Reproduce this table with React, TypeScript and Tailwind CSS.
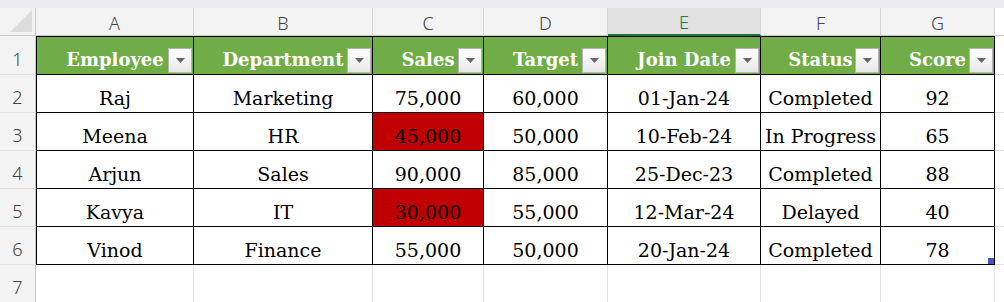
import React from "react";

const colLetters = ["A", "B", "C", "D", "E", "F", "G"];
const colWidth = ["w-[158px]", "w-[179px]", "w-[111px]", "w-[124px]", "w-[153px]", "w-[120px]", "w-[114px]"];

const headers = ["Employee", "Department", "Sales", "Target", "Join Date", "Status", "Score"];

const rows = [
  ["Raj", "Marketing", "75,000", "60,000", "01-Jan-24", "Completed", "92"],
  ["Meena", "HR", "45,000", "50,000", "10-Feb-24", "In Progress", "65"],
  ["Arjun", "Sales", "90,000", "85,000", "25-Dec-23", "Completed", "88"],
  ["Kavya", "IT", "30,000", "55,000", "12-Mar-24", "Delayed", "40"],
  ["Vinod", "Finance", "55,000", "50,000", "20-Jan-24", "Completed", "78"],
];

// sales under target get the red fill
const isLow = (r: string[]) => parseInt(r[2].replace(",", "")) < parseInt(r[3].replace(",", ""));

const serif = "font-['DejaVu_Serif',serif]";
const ui = "font-['Noto_Sans',sans-serif] font-light text-[18px] text-[#444]";

function FilterButton() {
  return (
    <span className="absolute bottom-px right-px flex h-[25px] w-[24px] items-center justify-center border border-[#b4b4b4] bg-gradient-to-b from-white to-[#e8e8e8]">
      <svg width="9" height="5" viewBox="0 0 9 5">
        <path d="M0 0 H9 L4.5 5 Z" fill="#666" />
      </svg>
    </span>
  );
}

function RowHead({ n, h }: { n: number; h: string }) {
  return (
    <div className={`${h} w-[36px] shrink-0 flex items-end justify-center pb-[6px] border-r border-b border-r-[#c8c8c8] border-b-[#e2e2e2] bg-[#f3f3f3] ${ui} leading-none`}>
      {n}
    </div>
  );
}

export default function App() {
  return (
    <div className="w-[1004px] h-[302px] overflow-hidden bg-white">
      <div className="h-[8px] bg-[#e9ebee]" />

      {/* column letters */}
      <div className="flex h-[28px]">
        <div className="relative w-[36px] shrink-0 border-b border-r border-[#c8c8c8] bg-[#f3f3f3]">
          <svg className="absolute bottom-[3px] right-[3px]" width="22" height="22" viewBox="0 0 22 22">
            <path d="M22 0 V22 H0 Z" fill="#dcdcdc" />
          </svg>
        </div>
        {colLetters.map((c, i) => {
          const sel = c === "E";
          return (
            <div
              key={c}
              className={`${colWidth[i]} shrink-0 flex items-end justify-center pb-[3px] leading-none border-r border-r-[#d4d4d4] ${ui} ${
                sel ? "bg-[#e1e1e1] !text-[#1e7145] border-b-2 border-b-[#1e7145]" : "bg-[#f3f3f3] border-b border-b-[#c8c8c8]"
              }`}
            >
              {c}
            </div>
          );
        })}
        <div className="flex-1 border-b border-[#c8c8c8] bg-white" />
      </div>

      {/* row 1: table headers */}
      <div className="flex h-[39px]">
        <RowHead n={1} h="h-[39px]" />
        {headers.map((t, i) => (
          <div
            key={t}
            className={`${colWidth[i]} relative shrink-0 flex items-end justify-center pb-[5px] border-y border-r border-black ${i === 0 ? "border-l" : ""} bg-[#70ad47] ${serif} text-[18px] font-bold text-white leading-none`}
          >
            {t}
            <FilterButton />
          </div>
        ))}
        <div className="flex-1 border-b border-[#e1e1e1]" />
      </div>

      {/* data rows */}
      {rows.map((r, ri) => (
        <div key={ri} className="flex h-[38px]">
          <RowHead n={ri + 2} h="h-[38px]" />
          {r.map((v, ci) => (
            <div
              key={ci}
              className={`${colWidth[ci]} relative shrink-0 flex items-end justify-center pb-[4px] border-b border-r border-black ${ci === 0 ? "border-l" : ""} ${
                ci === 2 && isLow(r) ? "bg-[#c00000]" : "bg-white"
              } ${serif} text-[19px] text-black leading-none`}
            >
              {v}
              {ri === rows.length - 1 && ci === 6 && <span className="absolute bottom-0 right-0 h-[6px] w-[6px] bg-[#4754c0]" />}
            </div>
          ))}
          <div className="flex-1 border-b border-[#e1e1e1]" />
        </div>
      ))}

      {/* empty row 7 */}
      <div className="flex h-[38px]">
        <RowHead n={7} h="h-[38px]" />
        {colWidth.map((w, i) => (
          <div key={i} className={`${w} shrink-0 border-r border-b border-[#e1e1e1] ${i === 0 ? "border-l border-l-black/0" : ""}`} />
        ))}
        <div className="flex-1 border-b border-[#e1e1e1]" />
      </div>
    </div>
  );
}
